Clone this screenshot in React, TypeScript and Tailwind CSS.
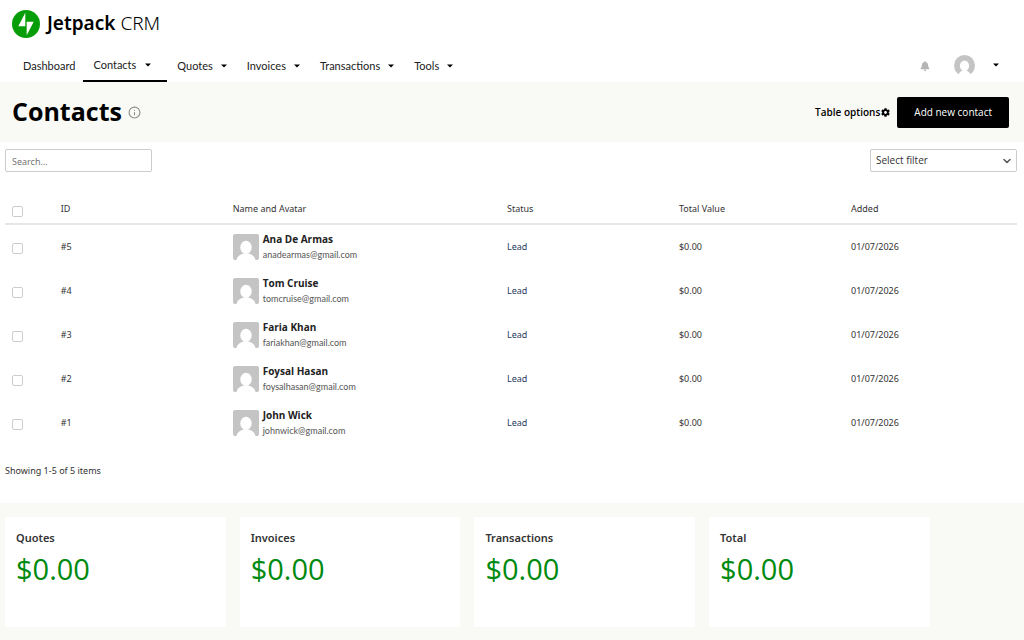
import { FaBell, FaCog } from "react-icons/fa";
import { ChevronDown, Info } from "lucide-react";

const menus = ["Quotes", "Invoices", "Transactions", "Tools"];

const contacts = [
  { id: 5, name: "Ana De Armas", email: "anadearmas@gmail.com" },
  { id: 4, name: "Tom Cruise", email: "tomcruise@gmail.com" },
  { id: 3, name: "Faria Khan", email: "fariakhan@gmail.com" },
  { id: 2, name: "Foysal Hasan", email: "foysalhasan@gmail.com" },
  { id: 1, name: "John Wick", email: "johnwick@gmail.com" },
];

const totals = ["Quotes", "Invoices", "Transactions", "Total"];

function Caret() {
  return (
    <svg viewBox="0 0 6 4" className="h-1 w-1.5 shrink-0" aria-hidden="true">
      <path d="M0 0.5h6L3 3.5z" fill="#000" />
    </svg>
  );
}

function Silhouette({ className }: { className: string }) {
  return (
    <svg viewBox="0 0 26 26" className={className} aria-hidden="true">
      <rect width="26" height="26" fill="#c4c4c4" />
      <ellipse cx="13" cy="13.4" rx="5.700" ry="6.600" fill="#fff" />
      <path d="M3.500 26c.5-3.200 3-5.300 7-6.500h5c4 1.200 6.500 3.300 7 6.500z" fill="#fff" />
    </svg>
  );
}

function AccountAvatar() {
  return (
    <svg viewBox="0 0 21 21" className="size-[21px]" aria-hidden="true">
      <circle cx="10.500" cy="10.500" r="10.500" fill="#c4c4c4" />
      <ellipse cx="10.500" cy="10.800" rx="4.600" ry="5.300" fill="#fff" />
      <path d="M4.200 21c.5-2.800 2-4.600 4.600-5.700h3.400c2.600 1.100 4.100 2.900 4.600 5.700z" fill="#fff" />
    </svg>
  );
}

function Tick({ label }: { label: string }) {
  return (
    <input
      type="checkbox"
      aria-label={label}
      className="mt-0.5 ml-[7px] block size-[11px] appearance-none rounded-xs border border-[#ccc] bg-white checked:bg-[#069e08]"
    />
  );
}

function Header() {
  return (
    <header>
      <a href="#home" className="flex h-12 items-center gap-[7px] px-3 text-[19px] text-black">
        <svg viewBox="0 0 24 24" className="size-7" aria-hidden="true">
          <circle cx="12" cy="12" r="12" fill="#069e08" />
          <path d="M11.400 2.400V14h-6zM12.600 21.600V10h6z" fill="#fff" />
        </svg>
        <span className="pb-0.5">
          <span className="font-semibold">Jetpack</span> <span className="font-light">CRM</span>
        </span>
      </a>
      <nav className="flex h-[34px] items-stretch pl-[13px] font-['Lato',sans-serif] text-[11px] text-[#222]">
        <a href="#dashboard" className="flex items-center pt-0.5 pr-2 pl-2.5">
          Dashboard
        </a>
        <button className="flex items-center gap-[9px] border-b-2 border-black pt-0.5 pr-4 pl-2.5">
          Contacts <Caret />
        </button>
        {menus.map((m) => (
          <button key={m} className="flex items-center gap-2 px-2.5 pt-0.5">
            {m} <Caret />
          </button>
        ))}
        <div className="ml-auto flex items-center pr-[25px]">
          <button aria-label="Notifications" className="pt-0.5">
            <FaBell className="size-[10px] text-[#b5b5b5]" />
          </button>
          <button aria-label="Account" className="ml-6 flex items-center gap-[18px]">
            <AccountAvatar />
            <Caret />
          </button>
        </div>
      </nav>
    </header>
  );
}

export default function App() {
  return (
    <div className="flex min-h-screen flex-col bg-white font-['Noto_Sans',sans-serif] text-[9px] text-[#333]">
      <Header />
      <section className="flex h-[60px] items-center bg-[#f9f9f6] pr-[15px] pl-3 font-['Open_Sans',sans-serif]">
        <h1 className="text-[25px] font-bold text-black">Contacts</h1>
        <button aria-label="About contacts" className="ml-1.5">
          <Info className="size-[13px] text-[#8c8c8c]" strokeWidth={2} />
        </button>
        <button className="ml-auto flex items-center gap-px text-[10px] font-semibold text-black">
          Table options <FaCog className="size-[9px]" />
        </button>
        <button className="ml-[7px] h-[31px] rounded-xs bg-black px-[17px] text-[10px] text-white">
          Add new contact
        </button>
      </section>

      <main className="flex-1 px-[5px] pr-[7px]">
        <div className="flex items-center justify-between pt-[7px]">
          <input
            type="text"
            aria-label="Search contacts"
            placeholder="Search..."
            className="h-[23px] w-[147px] rounded-xs border border-[#ccc] px-1.5 pt-px placeholder:text-[#757575]"
          />
          <div className="relative">
            <select
              aria-label="Select filter"
              className="h-[23px] w-[147px] appearance-none rounded-xs border border-[#ccc] bg-white px-[5px] font-['Open_Sans',sans-serif] text-[10px]"
            >
              <option>Select filter</option>
            </select>
            <ChevronDown className="pointer-events-none absolute top-1.5 right-1 size-3 text-[#555]" strokeWidth={3} />
          </div>
        </div>

        <table className="mt-[22px] w-full table-fixed border-separate border-spacing-0 text-left">
          <colgroup>
            <col className="w-[5.500%]" />
            <col className="w-[17%]" />
            <col className="w-[27.100%]" />
            <col className="w-[17%]" />
            <col className="w-[17%]" />
            <col />
          </colgroup>
          <thead>
            <tr className="h-[31px] *:border-b-2 *:border-[#e6e6e6]">
              <th className="pt-1">
                <Tick label="Select all contacts" />
              </th>
              <th className="font-normal">ID</th>
              <th className="font-normal">Name and Avatar</th>
              <th className="font-normal">Status</th>
              <th className="font-normal">Total Value</th>
              <th className="font-normal">Added</th>
            </tr>
          </thead>
          <tbody>
            {contacts.map((c) => (
              <tr key={c.id} className="h-11">
                <td>
                  <Tick label={`Select ${c.name}`} />
                </td>
                <td>#{c.id}</td>
                <td>
                  <div className="flex items-center gap-1">
                    <Silhouette className="size-[26px] rounded-xs" />
                    <div>
                      <div className="font-['Open_Sans',sans-serif] text-[10px] leading-[15px] font-bold text-[#222]">
                        {c.name}
                      </div>
                      <div className="font-['Lato',sans-serif] leading-[15px] text-[#555]">{c.email}</div>
                    </div>
                  </div>
                </td>
                <td className="text-[#1f3a5f]">Lead</td>
                <td>$0.00</td>
                <td>01/07/2026</td>
              </tr>
            ))}
          </tbody>
        </table>

        <p className="pt-[19px] pb-[25px] leading-[14px]">Showing 1-5 of 5 items</p>
      </main>

      <footer className="bg-[#f9f9f6] px-[5px] pt-3.5 pb-[13px]">
        <div className="grid w-[91.200%] grid-cols-4 gap-3.5">
          {totals.map((t) => (
            <article key={t} className="h-[110px] bg-white px-[11px] pt-3">
              <h2 className="text-[11px] leading-[18px] font-semibold text-[#333]">{t}</h2>
              <p className="font-['Open_Sans',sans-serif] text-[29px] leading-[44px] text-[#008a10]">$0.00</p>
            </article>
          ))}
        </div>
      </footer>
    </div>
  );
}
